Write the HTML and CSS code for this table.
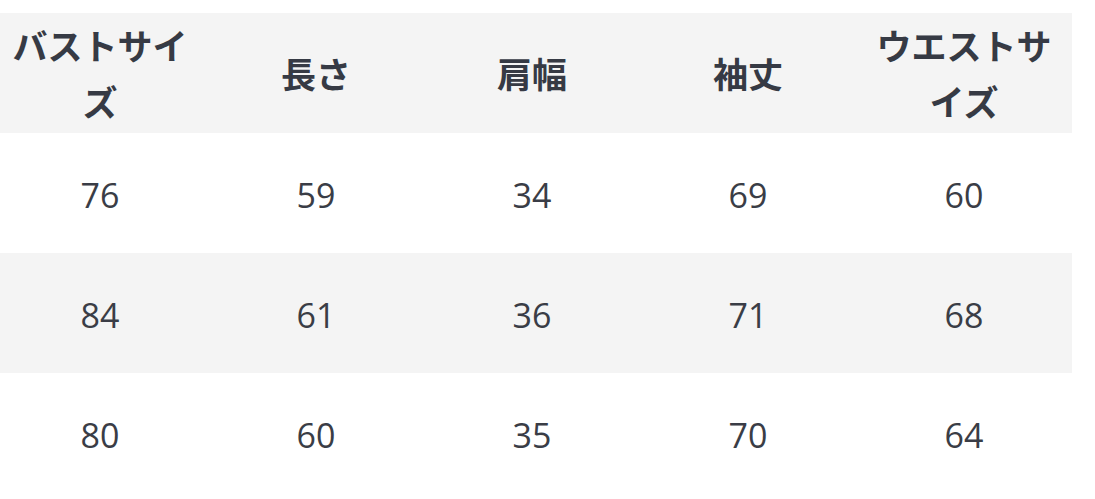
FILE: index.html
```html
<!DOCTYPE html>
<html lang="ja">
<head>
<meta charset="utf-8">
<link rel="stylesheet" href="styles.css">
</head>
<body>
<div class="page">
  <table class="size-table">
    <thead>
      <tr>
        <th>バストサイズ</th>
        <th>長さ</th>
        <th>肩幅</th>
        <th>袖丈</th>
        <th>ウエストサイズ</th>
      </tr>
    </thead>
    <tbody>
      <tr><td>76</td><td>59</td><td>34</td><td>69</td><td>60</td></tr>
      <tr class="alt"><td>84</td><td>61</td><td>36</td><td>71</td><td>68</td></tr>
      <tr><td>80</td><td>60</td><td>35</td><td>70</td><td>64</td></tr>
    </tbody>
  </table>
</div>
</body>
</html>
```

FILE: styles.css
```css
html, body {
  margin: 0;
  padding: 0;
  background: #ffffff;
}

.page {
  padding-top: 13px;
  margin-left: -8px;
  width: 1080px;
}

.size-table {
  width: 1080px;
  border-collapse: collapse;
  table-layout: fixed;
  color: #363a44;
}

.size-table th,
.size-table td {
  width: 216px;
  height: 120px;
  padding: 0 12px;
  box-sizing: border-box;
  text-align: center;
  vertical-align: middle;
}

.size-table thead tr {
  background: #f4f4f4;
}

.size-table th {
  font-family: "Noto Sans CJK JP", "Noto Sans", sans-serif;
  font-weight: 700;
  font-size: 35px;
  line-height: 56px;
}

.size-table td {
  font-family: "Open Sans", "Noto Sans", sans-serif;
  font-weight: 400;
  font-size: 34px;
  line-height: 1;
  padding-top: 3px;
  color: #3a3d46;
}

.size-table tr.alt {
  background: #f4f4f4;
}
```
